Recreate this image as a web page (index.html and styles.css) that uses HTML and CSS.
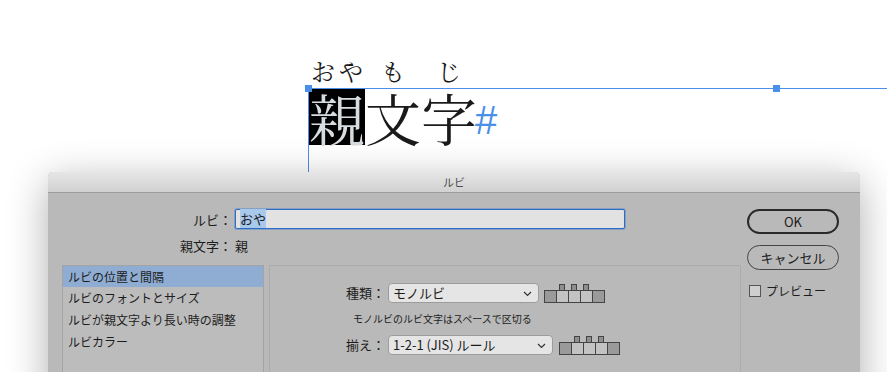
FILE: index.html
```html
<!DOCTYPE html>
<html lang="ja">

<head>
    <meta charset="UTF-8">
    <meta name="viewport" content="width=device-width, initial-scale=1.0">
    <title>ルビ</title>
    <link rel="stylesheet" href="styles.css">
</head>

<body>
    <!-- アートボード上のテキストフレーム -->
    <div class="canvas">
        <div class="text-frame">
            <span class="handle handle-start"></span>
            <span class="handle handle-end"></span>
            <div class="ruby-line">
                <span class="rt rt-half">お</span><span class="rt rt-half">や</span><span class="rt">も</span><span class="rt">じ</span>
            </div>
            <div class="base-line"><span class="selected">親</span>文字<span class="hash">#</span></div>
        </div>
    </div>

    <!-- ルビダイアログ -->
    <div class="dialog">
        <div class="dialog-title">ルビ</div>
        <div class="dialog-body">
            <div class="main-col">
                <div class="field-row">
                    <label class="field-label">ルビ：</label>
                    <div class="text-input"><span class="text-sel">おや</span></div>
                </div>
                <div class="field-row">
                    <span class="field-label">親文字：</span>
                    <span class="field-value">親</span>
                </div>

                <div class="panels">
                    <ul class="side-list">
                        <li class="active">ルビの位置と間隔</li>
                        <li>ルビのフォントとサイズ</li>
                        <li>ルビが親文字より長い時の調整</li>
                        <li>ルビカラー</li>
                    </ul>
                    <div class="settings">
                        <div class="setting-row">
                            <span class="setting-label">種類：</span>
                            <div class="select select-type">モノルビ
                                <svg class="chevron" width="9" height="6" viewBox="0 0 9 6"><polyline points="1,1 4.5,4.5 8,1" fill="none" stroke="#333" stroke-width="1.2"/></svg>
                            </div>
                            <div class="ruby-icon">
                                <div class="tabs"><span></span><span></span><span></span></div>
                                <div class="boxes"><span class="dark"></span><span></span><span></span><span></span><span class="dark"></span></div>
                            </div>
                        </div>
                        <div class="setting-note">モノルビのルビ文字はスペースで区切る</div>
                        <div class="setting-row">
                            <span class="setting-label">揃え：</span>
                            <div class="select select-align">1-2-1 (JIS) ルール
                                <svg class="chevron" width="9" height="6" viewBox="0 0 9 6"><polyline points="1,1 4.5,4.5 8,1" fill="none" stroke="#333" stroke-width="1.2"/></svg>
                            </div>
                            <div class="ruby-icon ruby-icon-align">
                                <div class="tabs"><span></span><span></span><span></span></div>
                                <div class="boxes"><span class="dark"></span><span></span><span></span><span></span><span class="dark"></span></div>
                            </div>
                        </div>
                    </div>
                </div>
            </div>

            <div class="side-col">
                <button class="btn btn-default">OK</button>
                <button class="btn">キャンセル</button>
                <label class="check"><span class="check-box"></span>プレビュー</label>
            </div>
        </div>
    </div>
</body>

</html>
```

FILE: styles.css
```css
body {
    font-family: "Noto Sans CJK JP", "Noto Sans", sans-serif;
    margin: 0;
    padding: 0;
    background-color: #ffffff;
    overflow: hidden;
    color: #1c1c1c;
}

/* アートボード */
.canvas {
    position: relative;
    height: 172px;
}

.text-frame {
    position: absolute;
    top: 88px;
    left: 308px;
    right: 0;
    height: 200px;
    border-top: 1px solid #4a8fe8;
    border-left: 1px solid #4a8fe8;
}

.handle {
    position: absolute;
    top: -4px;
    width: 7px;
    height: 7px;
    background-color: #4a8fe8;
}

.handle-start {
    left: -4px;
}

.handle-end {
    left: 464px;
}

.ruby-line {
    position: absolute;
    top: -30px;
    left: 0;
    display: flex;
    font-family: "Noto Serif CJK JP", "Noto Sans CJK JP", serif;
    font-size: 24px;
    line-height: 24px;
    color: #1a1a1a;
}

.rt {
    width: 56px;
    text-align: center;
}

.rt-half {
    width: 28px;
}

.base-line {
    display: flex;
    align-items: flex-end;
    font-family: "Noto Serif CJK JP", "Noto Sans CJK JP", serif;
    font-size: 56px;
    line-height: 56px;
    color: #1a1a1a;
}

.selected {
    background-color: #000;
    color: #d6dce0;
}

.hash {
    font-family: "Liberation Sans", sans-serif;
    font-size: 40px;
    line-height: 42px;
    color: #4a8fe8;
    margin-left: -2px;
    margin-bottom: 4px;
}

/* ダイアログ */
.dialog {
    position: relative;
    z-index: 10;
    margin-left: 48px;
    width: 812px;
    height: 260px;
    background-color: #b9b9b9;
    border-radius: 5px 5px 0 0;
    box-shadow: 0 10px 40px rgba(0, 0, 0, 0.32);
}

.dialog-title {
    height: 20px;
    line-height: 21px;
    text-align: center;
    font-size: 11px;
    color: #4a4a4a;
    background: linear-gradient(#e6e6e6, #d1d1d1);
    border-radius: 5px 5px 0 0;
    border-bottom: 1px solid #9c9c9c;
}

.dialog-body {
    display: flex;
    padding: 16px 0 0 14px;
}

.main-col {
    width: 679px;
}

.field-row {
    display: flex;
    align-items: center;
    height: 20px;
    margin-bottom: 6px;
    font-size: 13px;
}

.field-row + .field-row {
    margin-bottom: 10px;
}

.field-label {
    width: 170px;
    text-align: right;
    padding-right: 3px;
}

.text-input {
    width: 384px;
    height: 18px;
    line-height: 18px;
    padding-left: 4px;
    background-color: #e2e2e2;
    border: 1px solid #2d6cc2;
    border-radius: 2px;
    box-shadow: 0 0 0 1px rgba(70, 130, 210, 0.45);
}

.text-sel {
    background-color: #a8c8ec;
}

.panels {
    display: flex;
    gap: 5px;
}

.side-list {
    list-style: none;
    margin: 0;
    padding: 0;
    width: 200px;
    height: 120px;
    border: 1px solid #a4a4a4;
    background-color: #bcbcbc;
    font-size: 12px;
}

.side-list li {
    height: 22px;
    line-height: 22px;
    padding-left: 5px;
}

.side-list li.active {
    background-color: #8fadd3;
    height: 21px;
}

.settings {
    width: 470px;
    height: 120px;
    border: 1px solid #acacac;
    padding-top: 16px;
    font-size: 13px;
}

.setting-row {
    display: flex;
    align-items: flex-end;
    height: 21px;
}

.setting-label {
    width: 115px;
    text-align: right;
    padding-right: 3px;
    align-self: center;
}

.select {
    position: relative;
    height: 18px;
    line-height: 18px;
    padding-left: 4px;
    background-color: #e5e5e5;
    border: 1px solid #9c9c9c;
    border-radius: 4px;
    align-self: center;
}

.select-type {
    width: 145px;
}

.select-align {
    width: 159px;
}

.chevron {
    position: absolute;
    right: 6px;
    top: 7px;
}

.ruby-icon {
    margin-left: 5px;
    display: flex;
    flex-direction: column;
}

.ruby-icon-align {
    margin-left: 6px;
}

.tabs {
    display: flex;
    gap: 6px;
    padding-left: 15px;
    height: 6px;
}

.tabs span {
    width: 6px;
    height: 6px;
    box-sizing: border-box;
    background-color: #8f8f8f;
    border: 1px solid #444;
    border-bottom: none;
}

.boxes {
    display: flex;
}

.boxes span {
    box-sizing: border-box;
    width: 13px;
    height: 13px;
    background-color: #c3c3c3;
    border: 1px solid #444;
    margin-left: -1px;
}

.boxes span:first-child {
    margin-left: 0;
}

.boxes span.dark {
    background-color: #9a9a9a;
}

.setting-note {
    height: 31px;
    line-height: 31px;
    padding-left: 83px;
    font-size: 10px;
}

/* 右側のボタン */
.side-col {
    margin-left: 6px;
    width: 92px;
    display: flex;
    flex-direction: column;
}

.btn {
    font-family: inherit;
    font-size: 13px;
    height: 25px;
    padding: 0;
    background-color: transparent;
    color: #1c1c1c;
    border: 1px solid #444;
    border-radius: 13px;
    margin-bottom: 11px;
}

.btn-default {
    border: 2px solid #2a2a2a;
}

.check {
    display: flex;
    align-items: center;
    gap: 5px;
    font-size: 12px;
    margin-top: 1px;
    padding-left: 2px;
}

.check-box {
    width: 10px;
    height: 10px;
    border: 1px solid #555;
    background-color: #cfcfcf;
}
```
